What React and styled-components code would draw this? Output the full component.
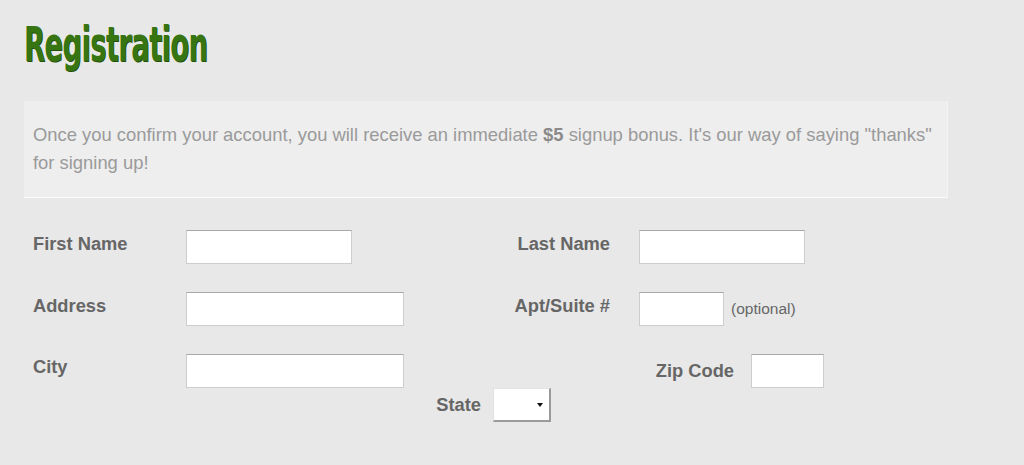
import React from 'react';
import styled, { createGlobalStyle } from 'styled-components';

const GlobalStyle = createGlobalStyle`
  * {
    margin: 0;
    padding: 0;
    box-sizing: border-box;
  }
  body {
    background: #e8e8e8;
    font-family: 'Liberation Sans', Arial, sans-serif;
  }
`;

const Page = styled.div`
  width: 1024px;
  height: 465px;
  padding: 0 24px;
  overflow: hidden;
`;

const TitleWrap = styled.div`
  height: 101px;
  padding-top: 16px;
`;

const Title = styled.h1`
  display: inline-block;
  font-family: 'DejaVu Sans', sans-serif;
  font-stretch: condensed;
  font-weight: bold;
  font-size: 48px;
  line-height: 56px;
  letter-spacing: -1px;
  color: #377512;
  text-shadow: 1px 1px 0 #24500a;
  transform: scaleX(0.635);
  transform-origin: left center;
`;

const Notice = styled.div`
  width: 924px;
  background: #eeeeee;
  border-bottom: 1px solid #fafafa;
  border-right: 1px solid #f3f3f3;
  padding: 20px 0 20px 9px;
  font-size: 18.4px;
  line-height: 28px;
  color: #9a9a9a;
  white-space: nowrap;

  b {
    color: #8a8a8a;
  }
`;

const Form = styled.form`
  padding: 32px 0 0 9px;
`;

const Row = styled.div`
  display: flex;
  align-items: ${p => (p.$center ? 'center' : 'flex-start')};
  height: 34px;
  margin-bottom: ${p => p.$gap ?? 28}px;
`;

const Half = styled.div`
  display: flex;
  align-items: ${p => (p.$center ? 'center' : 'flex-start')};
  width: ${p => p.$w || 'auto'};
  height: 100%;
`;

const Label = styled.label`
  width: ${p => p.$w}px;
  margin-right: ${p => p.$mr || 0}px;
  padding-top: ${p => p.$pt ?? 4}px;
  text-align: ${p => p.$align || 'left'};
  font-size: 18.3px;
  line-height: 20px;
  font-weight: bold;
  color: #666;
  white-space: nowrap;
`;

const Input = styled.input.attrs({ type: 'text' })`
  width: ${p => p.$w}px;
  height: 34px;
  background: #fff;
  border: 1px solid #cdcdcd;
  border-top-color: #a8a8a8;
  outline: none;
  font-size: 15px;
  padding: 0 6px;
`;

const Hint = styled.span`
  margin-left: 7px;
  align-self: center;
  font-size: 15.5px;
  color: #666;
`;

const SelectBox = styled.div`
  position: relative;
  width: 58px;
  height: 34px;
  background: #fff;
  border: 1px solid #e2e2e2;
  border-right: 2px solid #9a9a9a;
  border-bottom: 2px solid #9a9a9a;

  &::after {
    content: '';
    position: absolute;
    right: 6px;
    top: 14px;
    border-left: 3px solid transparent;
    border-right: 3px solid transparent;
    border-top: 4px solid #111;
  }
`;

const Select = styled.select`
  appearance: none;
  width: 100%;
  height: 100%;
  border: none;
  background: transparent;
  outline: none;
`;

export default function App() {
  return (
    <>
      <GlobalStyle />
      <Page>
        <TitleWrap>
          <Title>Registration</Title>
        </TitleWrap>
        <Notice>
          Once you confirm your account, you will receive an immediate <b>$5</b> signup bonus. It's our way of saying "thanks"
          <br />
          for signing up!
        </Notice>
        <Form>
          <Row>
            <Half $w="457px">
              <Label $w={153}>First Name</Label>
              <Input $w={166} />
            </Half>
            <Half>
              <Label $w={120} $mr={29} $align="right">Last Name</Label>
              <Input $w={166} />
            </Half>
          </Row>
          <Row>
            <Half $w="457px">
              <Label $w={153}>Address</Label>
              <Input $w={218} />
            </Half>
            <Half>
              <Label $w={120} $mr={29} $align="right">Apt/Suite #</Label>
              <Input $w={85} />
              <Hint>(optional)</Hint>
            </Half>
          </Row>
          <Row $gap={0}>
            <Half $w="457px">
              <Label $w={153} $pt={3}>City</Label>
              <Input $w={218} />
            </Half>
            <Half $center>
              <Label $w={244} $mr={17} $pt={0} $align="right">Zip Code</Label>
              <Input $w={73} />
            </Half>
          </Row>
          <Row $center>
            <Half $center>
              <Label $w={448} $mr={12} $pt={0} $align="right">State</Label>
              <SelectBox>
                <Select>
                  <option value=""></option>
                </Select>
              </SelectBox>
            </Half>
          </Row>
        </Form>
      </Page>
    </>
  );
}
